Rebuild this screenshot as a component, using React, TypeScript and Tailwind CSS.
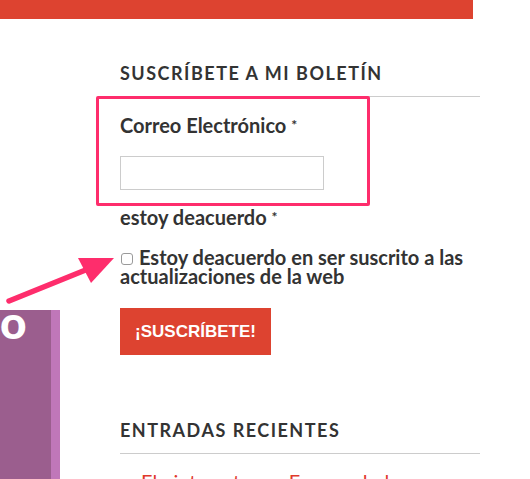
import React from 'react';

// Sidebar newsletter widget, with a callout box and arrow drawn over the form
const App: React.FC = () => {
  return (
    <div className="relative h-[479px] w-[530px] overflow-hidden bg-white font-['Lato',sans-serif] text-[#333333]">
      {/* Header strip */}
      <div className="h-[19px] w-[473px] bg-[#dd4330]" />

      <div className="flex">
        {/* Main content column (mostly off-screen) */}
        <div className="w-[120px] shrink-0 pt-[291px]">
          <div className="flex h-[169px] w-[60px] overflow-hidden bg-[#9b5e8e]">
            <span className="text-[46px] font-black leading-[24px] text-white">o</span>
            <div className="ml-auto h-full w-[9px] bg-[#c077b9]" />
          </div>
        </div>

        {/* Sidebar */}
        <aside className="w-[360px] pt-[42px]">
          <h3 className="border-b border-[#cccccc] pb-[11px] text-[18px] font-bold uppercase leading-[24px] tracking-[1.5px] text-[#333333]">
            Suscríbete a mi boletín
          </h3>

          <form className="flex flex-col" onSubmit={(e) => e.preventDefault()}>
            <label className="mt-[16px] text-[20px] font-bold leading-[24px]">
              Correo Electrónico <span className="align-top text-[14px]">*</span>
            </label>
            <input
              type="email"
              className="mt-[19px] h-[34px] w-[204px] border border-[#cccccc] bg-white px-2 outline-none"
            />

            <label className="mt-[15px] text-[20px] font-bold leading-[24px]">
              estoy deacuerdo <span className="align-top text-[14px]">*</span>
            </label>

            <label className="mt-[19px] text-[20px] font-bold leading-[19px]">
              <input
                type="checkbox"
                className="mr-[6px] ml-[1px] inline-block h-[12px] w-[12px] appearance-none rounded-[3px] border border-[#9a9a9a] bg-white align-[0px]"
              />
              Estoy deacuerdo en ser suscrito a las actualizaciones de la web
            </label>

            <button
              type="submit"
              className="mt-[22px] h-[47px] w-[151px] bg-[#dd4330] font-['Liberation_Sans',Arial,sans-serif] text-[17px] font-bold text-white"
            >
              ¡SUSCRÍBETE!
            </button>
          </form>

          <h3 className="mt-[63px] border-b border-[#cccccc] pb-[11px] text-[18px] font-bold uppercase leading-[24px] tracking-[1.5px] text-[#333333]">
            Entradas recientes
          </h3>
          <ul className="mt-[15px] pl-[21px]">
            <li className="text-[20px] leading-[24px] text-[#e0392b]">El pinterest para Emprendedores</li>
          </ul>
        </aside>
      </div>

      {/* Callout box around the email field */}
      <div className="pointer-events-none absolute left-[96px] top-[96px] h-[110px] w-[274px] rounded-[2px] border-[3px] border-[#fe2d6c]" />

      {/* Callout arrow pointing at the checkbox */}
      <svg
        className="pointer-events-none absolute left-0 top-0"
        width="530"
        height="479"
        viewBox="0 0 530 479"
      >
        <line x1="9" y1="301" x2="93" y2="267" stroke="#fe2d6c" strokeWidth="5.5" strokeLinecap="round" />
        <polygon points="114,258 78,258 91,283" fill="#fe2d6c" />
      </svg>
    </div>
  );
};

export default App;
